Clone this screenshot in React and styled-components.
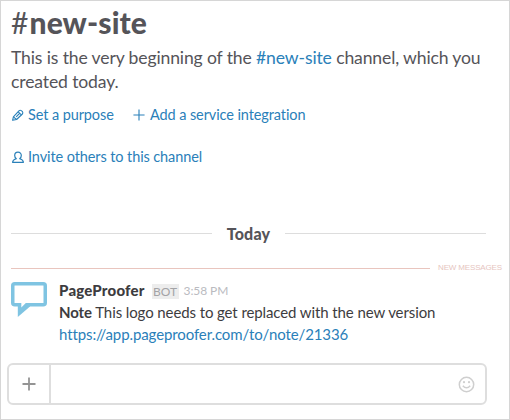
import React from "react";
import styled, { createGlobalStyle } from "styled-components";

const GlobalStyle = createGlobalStyle`
  * { box-sizing: border-box; }
  body { margin: 0; background: #fff; }
`;

const Frame = styled.main`
  width: 510px;
  height: 420px;
  overflow: hidden;
  border: 1px solid #d6d6d6;
  background: #fff;
  color: #3d3c40;
  font-family: Lato, sans-serif;
  font-variant-ligatures: none;
  display: flex;
  flex-direction: column;
`;

const Intro = styled.header`
  height: 216px;
  padding: 1px 0 0 10px;
  color: #555459;
`;

const Title = styled.h1`
  margin: 0;
  font-size: 30px;
  line-height: 40px;
  font-weight: 900;
  letter-spacing: 0.1px;
  white-space: nowrap;
`;

const Hash = styled.span`
  font-weight: 400;
  margin-right: 1px;
`;

const Lead = styled.p`
  margin: 4px 0 0;
  font-size: 17.6px;
  line-height: 24px;
  letter-spacing: -0.14px;
  white-space: nowrap;
`;

const Link = styled.a`
  color: #2a80b9;
  text-decoration: none;
`;

const Actions = styled.nav`
  display: grid;
  grid-template-columns: 122px auto;
  justify-content: start;
  row-gap: 22px;
  margin-top: 11px;
`;

const Action = styled(Link)`
  display: flex;
  align-items: center;
  gap: ${(p) => p.$gap || 4}px;
  height: 20px;
  font-size: 14.5px;
  line-height: 20px;
  letter-spacing: -0.1px;
  white-space: nowrap;
  grid-column: ${(p) => (p.$wide ? "1 / -1" : "auto")};
`;

const Icon = styled.svg`
  display: block;
  flex: none;
  fill: none;
  stroke: currentColor;
`;

const DayDivider = styled.div`
  display: flex;
  align-items: center;
  gap: 15px;
  height: 33px;
  margin: 0 23px 0 10px;
  font-size: 16px;
  font-weight: 900;
  letter-spacing: 0.2px;
  color: #555459;
`;

const Rule = styled.span`
  flex: 1;
  height: 1px;
  background: ${(p) => p.$color || "#dddddd"};
`;

const UnreadDivider = styled.div`
  display: flex;
  align-items: center;
  gap: 8px;
  height: 12px;
  margin: 12px 7px 0 10px;
  font: 8px/12px "Liberation Sans", Arial, sans-serif;
  letter-spacing: -0.15px;
  color: #e6c5c0;
`;

const Message = styled.article`
  display: flex;
  gap: 12px;
  height: 72px;
  margin: 5px 0 0 10px;
`;

const Avatar = styled(Icon)`
  margin-top: 3px;
  color: #7fc4e2;
`;

const Body = styled.div`
  font-size: 15px;
  line-height: 22px;
  letter-spacing: -0.1px;
  white-space: nowrap;
`;

const Meta = styled.div`
  display: flex;
  align-items: center;
  height: 22px;
`;

const Sender = styled.span`
  font-weight: 900;
  letter-spacing: 0.2px;
`;

const BotTag = styled.span`
  margin: 3px 5px 0 7px;
  padding: 0 1px;
  width: 27px;
  height: 15px;
  text-align: center;
  font-size: 12px;
  line-height: 16px;
  letter-spacing: 0;
  background: #ededed;
  color: #a3a3a6;
`;

const Time = styled.time`
  margin-top: 1px;
  font-size: 12px;
  color: #babbbf;
`;

const Line = styled.div`
  height: 22px;
`;

const Strong = styled.strong`
  font-weight: 700;
`;

const Composer = styled.div`
  display: flex;
  width: 480px;
  height: 42px;
  margin: 12px 0 0 6px;
  border: 2px solid #dedede;
  border-radius: 6px;
`;

const AddButton = styled.button`
  width: 42px;
  padding: 0;
  border: 0;
  border-right: 2px solid #dedede;
  background: none;
  color: #949494;
  display: grid;
  place-items: center;
`;

const Input = styled.div`
  flex: 1;
  display: flex;
  align-items: center;
  justify-content: flex-end;
  padding-right: 10px;
  color: #cfcfcf;
`;

const PencilIcon = () => (
  <Icon width="13" height="13" viewBox="0 0 13 13" strokeWidth="1.1" strokeLinejoin="round">
    <path d="M1.600 11.300L2.400 7.800L7.900 1.800Q9.100 .8 10.300 1.600L11.500 2.700Q12.300 3.900 11.400 5L5.600 10.500Z" />
    <path d="M2.400 7.800L5.600 10.500M7.200 2.800L10.400 5.800M8.300 4.700L5.200 7.900" />
  </Icon>
);

const PlusIcon = ({ size, weight }) => (
  <Icon width={size} height={size} viewBox="0 0 14 14" strokeWidth={weight}>
    <path d="M7 0.500V13.500M0.500 7H13.500" />
  </Icon>
);

const PersonIcon = () => (
  <Icon width="13" height="13" viewBox="0 0 13 13" strokeWidth="1.200" strokeLinejoin="round">
    <path d="M7 1.200C5 1.200 3.700 2.600 3.700 4.400C3.700 5.900 4.500 7.100 5.300 7.800C3.800 8.300 1.800 8.500 1.600 11.300H12.400C12.200 8.500 10.200 8.300 8.700 7.800C9.500 7.100 10.300 5.900 10.300 4.400C10.300 2.600 9 1.200 7 1.200Z" />
  </Icon>
);

const BubbleLogo = () => (
  <Avatar width="36" height="36" viewBox="0 0 36 36">
    <rect x="1.750" y="1.750" width="32.500" height="21" rx="2" strokeWidth="3.500" />
    <path d="M6.800 21V35L19 24.500V21Z" fill="currentColor" stroke="none" />
    <path d="M10.300 20.500H15.300L10.300 25.500Z" fill="#fff" stroke="none" />
  </Avatar>
);

const SmileIcon = () => (
  <Icon width="17" height="17" viewBox="0 0 17 17" strokeWidth="1.500">
    <circle cx="8.500" cy="8.500" r="7.200" />
    <path d="M4.800 9.700Q8.500 14 12.200 9.700" />
    <circle cx="6" cy="6.200" r="1.100" fill="currentColor" stroke="none" />
    <circle cx="11" cy="6.200" r="1.100" fill="currentColor" stroke="none" />
  </Icon>
);

export default function App() {
  return (
    <>
      <GlobalStyle />
      <Frame>
        <Intro>
          <Title><Hash>#</Hash>new-site</Title>
          <Lead>
            This is the very beginning of the <Link>#new-site</Link> channel, which you
            <br />
            created today.
          </Lead>
          <Actions>
            <Action><PencilIcon />Set a purpose</Action>
            <Action $gap={5}><PlusIcon size={12} weight={1.3} />Add a service integration</Action>
            <Action $wide><PersonIcon />Invite others to this channel</Action>
          </Actions>
        </Intro>
        <DayDivider><Rule />Today<Rule /></DayDivider>
        <UnreadDivider><Rule $color="#e9c5be" />NEW MESSAGES</UnreadDivider>
        <Message>
          <BubbleLogo />
          <Body>
            <Meta><Sender>PageProofer</Sender><BotTag>BOT</BotTag><Time>3:58 PM</Time></Meta>
            <Line><Strong>Note</Strong> This logo needs to get replaced with the new version</Line>
            <Line><Link>https://app.pageproofer.com/to/note/21336</Link></Line>
          </Body>
        </Message>
        <Composer>
          <AddButton aria-label="Add"><PlusIcon size={14} weight={1.8} /></AddButton>
          <Input><SmileIcon /></Input>
        </Composer>
      </Frame>
    </>
  );
}
